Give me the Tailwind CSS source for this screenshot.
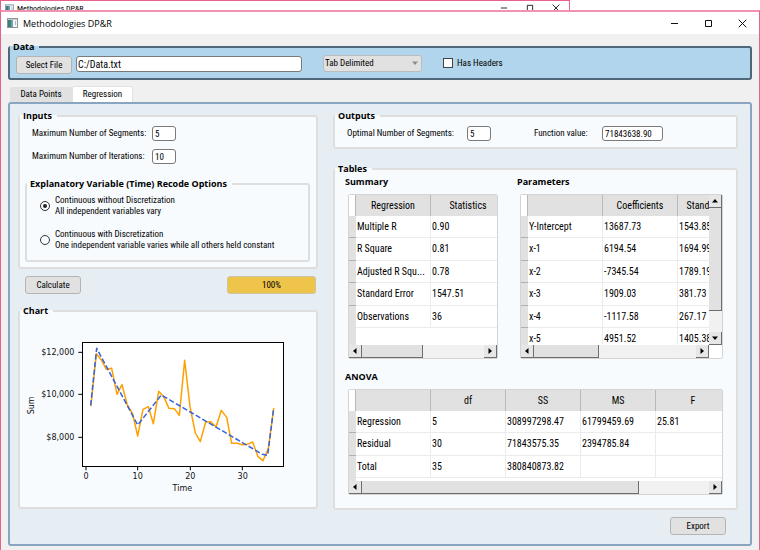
<!DOCTYPE html>
<html lang="en">
<head>
<meta charset="utf-8">
<title>Methodologies DP&amp;R</title>
<script src="https://cdn.jsdelivr.net/npm/@tailwindcss/browser@4"></script>
</head>
<body class="min-h-screen flex flex-col overflow-hidden bg-white text-black text-[9px] leading-[11px] font-['Roboto_Condensed','Open_Sans',sans-serif]">

<svg class="hidden">
  <symbol id="app" viewBox="0 0 11 10">
    <rect x="0.5" y="0.5" width="10" height="9" fill="#f4f6f8" stroke="#8d949a"/>
    <rect x="1" y="1" width="9" height="1" fill="#c3ccd6"/>
    <rect x="1" y="2" width="5" height="7" fill="#3f7f78"/>
    <rect x="4" y="2" width="2" height="7" fill="#6f9fb4"/>
    <rect x="8" y="3" width="1" height="4" fill="#aeb6bd"/>
  </symbol>
  <symbol id="min" viewBox="0 0 9 9"><path d="M1 4.5h7" stroke="#111" fill="none"/></symbol>
  <symbol id="max" viewBox="0 0 9 9"><path d="M1.5 1.5h6v6h-6z" stroke="#111" fill="none"/></symbol>
  <symbol id="close" viewBox="0 0 9 9"><path d="M0.7 0.7l7.6 7.6M8.3 0.7l-7.6 7.6" stroke="#111" fill="none"/></symbol>
  <symbol id="left" viewBox="0 0 6 6"><path d="M4.5 0v6L1 3z"/></symbol>
  <symbol id="right" viewBox="0 0 6 6"><path d="M1.5 0v6L5 3z"/></symbol>
  <symbol id="up" viewBox="0 0 6 6"><path d="M0 4.5h6L3 1z"/></symbol>
  <symbol id="down" viewBox="0 0 6 6"><path d="M0 1.5h6L3 5z"/></symbol>
</svg>

<!-- Window behind -->
<div class="w-3/4 h-[10px] overflow-hidden border-t border-x border-[#e8608c] flex items-start pl-1 pr-[9px]">
  <svg class="w-[9px] h-[9px] mt-[3px] shrink-0"><use href="#app"/></svg>
  <span class="ml-[3px] mt-[2px] text-[8px] leading-[11px] flex-1">Methodologies DP&amp;R</span>
  <div class="flex gap-[18px] mt-[3px] text-black">
    <svg class="w-2 h-2"><use href="#min"/></svg>
    <svg class="w-2 h-2"><use href="#max"/></svg>
    <svg class="w-2 h-2"><use href="#close"/></svg>
  </div>
</div>

<!-- Main window -->
<div class="flex-1 flex flex-col border-t-2 border-x border-t-[#f291b0] border-x-[#e8608c] bg-[#f0f0f0]">
  <header class="h-[22px] bg-white flex items-center pl-[6px] pr-[12px]">
    <svg class="w-[11px] h-[10px] shrink-0" aria-hidden="true"><use href="#app"/></svg>
    <h1 class="ml-[5px] flex-1 text-[9px] font-['Open_Sans',sans-serif]">Methodologies DP&amp;R</h1>
    <div class="flex gap-[25px]">
      <button aria-label="Minimize"><svg class="w-[9px] h-[9px]"><use href="#min"/></svg></button>
      <button aria-label="Maximize"><svg class="w-[9px] h-[9px]"><use href="#max"/></svg></button>
      <button aria-label="Close"><svg class="w-[9px] h-[9px]"><use href="#close"/></svg></button>
    </div>
  </header>

  <main class="px-[7px] pt-[7px]">
    <fieldset class="border-2 border-[#50677a] rounded-[3px] bg-[#b0d5ec]">
      <legend class="pl-[3px] pr-[5px] text-[9px] leading-[12px] font-bold font-['Open_Sans',sans-serif]">Data</legend>
      <div class="flex items-start pl-[6px] pt-[2px] pb-[4px]">
        <button class="mt-px w-[56px] h-[18px] border border-[#b4b4b4] rounded-[3px] bg-[#e1e1e1] text-[9px]">Select File</button>
        <input aria-label="File path" value="C:/Data.txt" class="mt-px ml-1 w-[226px] h-[16px] border border-[#7a7a7a] rounded-[3px] bg-white px-px text-[10px]">
        <div class="relative ml-[21px] w-[99px]">
          <select aria-label="Delimiter" class="appearance-none w-full h-[17px] border border-[#b9bdc0] rounded-[3px] bg-[#e1e1e1] pl-px text-[9px]"><option>Tab Delimited</option></select>
          <svg class="absolute right-[4px] top-[5px] w-[6px] h-[6px] fill-[#8c8c8c] pointer-events-none"><use href="#down"/></svg>
        </div>
        <label class="ml-[21px] h-[16px] flex items-center gap-1"><input type="checkbox" class="appearance-none w-[10px] h-[10px] border border-[#444] bg-white">Has Headers</label>
      </div>
    </fieldset>

    <div class="flex items-end pl-[2px] pt-[6px]" role="tablist">
      <button role="tab" class="w-[62px] h-[15px] bg-[#e1e1e1] rounded-t-[2px]">Data Points</button>
      <button role="tab" aria-selected="true" class="w-[61px] h-[16px] bg-white border border-b-0 border-[#e2e2e2] rounded-t-[2px]">Regression</button>
    </div>

    <section class="border-2 border-[#8aa5bf] rounded-[3px] bg-[#e6eef4] grid grid-cols-[minmax(0,300fr)_minmax(0,405fr)] gap-x-[15px] pl-2 pr-3 pt-[6px] pb-[9px]">

      <div class="flex flex-col">
        <fieldset class="border-2 border-[#dedede] rounded-[3px] bg-[#f8fbfe]">
          <legend class="pl-[3px] pr-[5px] text-[9px] leading-[12px] font-bold font-['Open_Sans',sans-serif]">Inputs</legend>
          <div class="pl-[5px] pr-[6px] pt-[4px] pb-[5px]">
            <div class="grid grid-cols-[120px_24px] gap-y-2 items-center pl-[7px]">
              <label for="seg">Maximum Number of Segments:</label>
              <input id="seg" value="5" class="w-full h-[15px] border border-[#7a7a7a] rounded-[3px] bg-white px-[2px]">
              <label for="iter">Maximum Number of Iterations:</label>
              <input id="iter" value="10" class="w-full h-[15px] border border-[#7a7a7a] rounded-[3px] bg-white px-[2px]">
            </div>
            <fieldset class="mt-[14px] border-2 border-[#dedede] rounded-[3px]">
              <legend class="pl-[3px] pr-[5px] text-[9px] leading-[12px] font-bold font-['Open_Sans',sans-serif]">Explanatory Variable (Time) Recode Options</legend>
              <div class="flex flex-col gap-3 pl-[13px] pt-[5px] pb-[9px]">
                <label class="flex items-center gap-[5px]"><input type="radio" name="opt" checked class="appearance-none w-[10px] h-[10px] shrink-0 rounded-full border border-[#333] p-[2px] bg-clip-content checked:bg-[#222]"><span>Continuous without Discretization<br>All independent variables vary</span></label>
                <label class="flex items-center gap-[5px]"><input type="radio" name="opt" class="appearance-none w-[10px] h-[10px] shrink-0 rounded-full border border-[#333] p-[2px] bg-clip-content checked:bg-[#222]"><span>Continuous with Discretization<br>One independent variable varies while all others held constant</span></label>
              </div>
            </fieldset>
          </div>
        </fieldset>

        <div class="flex justify-between mt-[7px] pl-[7px] pr-[2px]">
          <button class="w-[56px] h-[18px] border border-[#b4b4b4] rounded-[3px] bg-[#e1e1e1]">Calculate</button>
          <div role="progressbar" aria-valuenow="100" class="w-[89px] h-[18px] border border-[#cdc4a8] rounded-[3px] bg-[#eec44a] flex items-center justify-center">100%</div>
        </div>

        <fieldset class="mt-[11px] border-2 border-[#dedede] rounded-[3px] bg-[#f8fbfe]">
          <legend class="pl-[3px] pr-[5px] text-[9px] leading-[12px] font-bold font-['Open_Sans',sans-serif]">Chart</legend>
          <svg class="block w-full font-['DejaVu_Sans',sans-serif]" viewBox="60 66 888 570" fill="#111" font-size="24">
            <rect x="247.5" y="142.5" width="603" height="372" fill="#fff" stroke="#000" stroke-width="3"/>
            <path d="M235 172h12M235 298h12M235 427h12M258 515v11M413 515v11M571 515v11M727 515v11" stroke="#000" stroke-width="3"/>
            <polyline fill="none" stroke="#ffa000" stroke-width="4.5" stroke-linejoin="round" stroke-linecap="square" points="273,331 289,176 304,195 319,223 335,220 351,298 366,269 382,330 398,357 413,423 429,343 445,335 460,386 476,289 491,305 507,340 523,341 538,361 554,196 570,335 586,414 601,440 617,381 632,380 648,396 664,346 680,367 695,445 711,445 727,449 742,448 758,441 774,485 789,497 805,460 821,341"/>
            <polyline fill="none" stroke="#3463dc" stroke-width="4.5" stroke-dasharray="16 7" stroke-linejoin="round" points="272,331 290,160 413,390 484,300 787,478 803,481 821,340"/>
            <g text-anchor="end"><text x="223" y="180">$12,000</text><text x="223" y="307">$10,000</text><text x="223" y="435">$8,000</text></g>
            <g text-anchor="middle"><text x="258" y="553">0</text><text x="413" y="553">10</text><text x="571" y="553">20</text><text x="728" y="553">30</text><text x="547" y="589">Time</text><text transform="translate(102 331) rotate(-90)">Sum</text></g>
          </svg>
        </fieldset>
      </div>

      <div class="flex flex-col">
        <fieldset class="border-2 border-[#dedede] rounded-[3px] bg-[#f8fbfe]">
          <legend class="pl-[3px] pr-[5px] text-[9px] leading-[12px] font-bold font-['Open_Sans',sans-serif]">Outputs</legend>
          <div class="flex items-center pl-3 pt-[4px] pb-[6px]">
            <label for="opt-seg" class="w-[120px]">Optimal Number of Segments:</label>
            <input id="opt-seg" value="5" readonly class="w-[24px] h-[15px] border border-[#7a7a7a] rounded-[3px] bg-white px-[2px]">
            <label for="fv" class="ml-[43px] w-[68px]">Function value:</label>
            <input id="fv" value="71843638.90" readonly class="w-[61px] h-[15px] border border-[#7a7a7a] rounded-[3px] bg-white px-[2px]">
          </div>
        </fieldset>

        <fieldset class="mt-[14px] min-w-0 border-2 border-[#dedede] rounded-[3px] bg-[#f8fbfe]">
          <legend class="pl-[3px] pr-[5px] text-[9px] leading-[12px] font-bold font-['Open_Sans',sans-serif]">Tables</legend>
          <div class="px-[13px] pt-px pb-[13px]">
            <div class="flex gap-[22px]">
              <section class="w-[150px]">
                <h2 class="-ml-[3px] mb-[6px] text-[9px] leading-[12px] font-bold font-['Open_Sans',sans-serif]">Summary</h2>
                <div class="border border-[#d4d4d4] rounded-[2px] bg-white">
                  <div class="h-[150px] overflow-hidden">
                    <table class="table-fixed w-[157px] h-full border-separate border-spacing-0 text-[10px] leading-[12px] [&_thead_th]:border-r [&_thead_th]:border-[#b8b8b8] [&_thead_th]:bg-[#e1e1e1] [&_thead_th]:font-normal [&_tbody_th]:bg-[#e1e1e1] [&_tbody_th]:border-b [&_tbody_th]:border-[#b0b0b0] [&_td]:border-r [&_td]:border-b [&_td]:border-[#ebebeb] [&_td]:pl-px [&_td]:truncate">
                      <colgroup><col class="w-[7px]"><col class="w-[75px]"><col class="w-[75px]"></colgroup>
                      <thead><tr class="h-[21px]"><th class="bg-white!"></th><th>Regression</th><th>Statistics</th></tr></thead>
                      <tbody>
                        <tr class="h-[22px]"><th></th><td>Multiple R</td><td>0.90</td></tr>
                        <tr class="h-[23px]"><th></th><td>R Square</td><td>0.81</td></tr>
                        <tr class="h-[22px]"><th></th><td>Adjusted R Squ...</td><td>0.78</td></tr>
                        <tr class="h-[23px]"><th></th><td>Standard Error</td><td>1547.51</td></tr>
                        <tr class="h-[22px]"><th class="border-b-0!"></th><td>Observations</td><td>36</td></tr>
                        <tr><th class="border-b-0!"></th><td class="border-0!"></td><td class="border-0!"></td></tr>
                      </tbody>
                    </table>
                  </div>
                  <div class="h-[13px] flex bg-[#f1f1f1]">
                    <button aria-label="Scroll left" class="w-[13px] bg-[#e6e6e6] border-r border-b border-[#6e6e6e] flex items-center justify-center"><svg class="w-[6px] h-[6px]"><use href="#left"/></svg></button>
                    <div class="w-[61px] bg-[#e1e1e1] border-r border-b border-[#6e6e6e]"></div>
                    <div class="flex-1"></div>
                    <button aria-label="Scroll right" class="w-[13px] bg-[#e6e6e6] border-r border-b border-[#6e6e6e] flex items-center justify-center"><svg class="w-[6px] h-[6px]"><use href="#right"/></svg></button>
                  </div>
                </div>
              </section>

              <section class="flex-1 min-w-0">
                <h2 class="-ml-[3px] mb-[6px] text-[9px] leading-[12px] font-bold font-['Open_Sans',sans-serif]">Parameters</h2>
                <div class="border border-[#d4d4d4] rounded-[2px] bg-white">
                  <div class="flex h-[150px]">
                    <div class="flex-1 min-w-0 overflow-hidden">
                      <table class="table-fixed w-[232px] border-separate border-spacing-0 text-[10px] leading-[12px] [&_thead_th]:border-r [&_thead_th]:border-[#b8b8b8] [&_thead_th]:bg-[#e1e1e1] [&_thead_th]:font-normal [&_tbody_th]:bg-[#e1e1e1] [&_tbody_th]:border-b [&_tbody_th]:border-[#b0b0b0] [&_td]:border-r [&_td]:border-b [&_td]:border-[#ebebeb] [&_td]:pl-px [&_td]:truncate">
                        <colgroup><col class="w-[7px]"><col class="w-[75px]"><col class="w-[75px]"><col class="w-[75px]"></colgroup>
                        <thead><tr class="h-[21px]"><th class="bg-white!"></th><th></th><th>Coefficients</th><th class="whitespace-nowrap">Standard Error</th></tr></thead>
                        <tbody>
                          <tr class="h-[22px]"><th></th><td>Y-Intercept</td><td>13687.73</td><td>1543.85</td></tr>
                          <tr class="h-[23px]"><th></th><td>x-1</td><td>6194.54</td><td>1694.99</td></tr>
                          <tr class="h-[22px]"><th></th><td>x-2</td><td>-7345.54</td><td>1789.19</td></tr>
                          <tr class="h-[23px]"><th></th><td>x-3</td><td>1909.03</td><td>381.73</td></tr>
                          <tr class="h-[22px]"><th></th><td>x-4</td><td>-1117.58</td><td>267.17</td></tr>
                          <tr class="h-[23px]"><th></th><td>x-5</td><td>4951.52</td><td>1405.38</td></tr>
                        </tbody>
                      </table>
                    </div>
                    <div class="w-[13px] flex flex-col bg-[#f1f1f1]">
                      <button aria-label="Scroll up" class="h-[13px] bg-[#e6e6e6] border-r border-b border-[#6e6e6e] flex items-center justify-center"><svg class="w-[6px] h-[6px]"><use href="#up"/></svg></button>
                      <div class="h-[103px] bg-[#e1e1e1] border-r border-b border-[#6e6e6e]"></div>
                      <div class="flex-1"></div>
                      <button aria-label="Scroll down" class="h-[13px] bg-[#e6e6e6] border-r border-b border-[#6e6e6e] flex items-center justify-center"><svg class="w-[6px] h-[6px]"><use href="#down"/></svg></button>
                    </div>
                  </div>
                  <div class="h-[13px] flex bg-[#f1f1f1]">
                    <button aria-label="Scroll left" class="w-[13px] bg-[#e6e6e6] border-r border-b border-[#6e6e6e] flex items-center justify-center"><svg class="w-[6px] h-[6px]"><use href="#left"/></svg></button>
                    <div class="w-[65px] bg-[#e1e1e1] border-r border-b border-[#6e6e6e]"></div>
                    <div class="flex-1"></div>
                    <button aria-label="Scroll right" class="w-[13px] bg-[#e6e6e6] border-r border-b border-[#6e6e6e] flex items-center justify-center"><svg class="w-[6px] h-[6px]"><use href="#right"/></svg></button>
                    <div class="w-[13px] bg-white"></div>
                  </div>
                </div>
              </section>
            </div>

            <section class="mt-[12px]">
              <h2 class="-ml-[3px] mb-[6px] text-[9px] leading-[12px] font-bold font-['Open_Sans',sans-serif]">ANOVA</h2>
              <div class="border border-[#d4d4d4] rounded-[2px] bg-white">
                <div class="h-[91px] overflow-hidden">
                  <table class="table-fixed w-[382px] border-separate border-spacing-0 text-[10px] leading-[12px] [&_thead_th]:border-r [&_thead_th]:border-[#b8b8b8] [&_thead_th]:bg-[#e1e1e1] [&_thead_th]:font-normal [&_tbody_th]:bg-[#e1e1e1] [&_tbody_th]:border-b [&_tbody_th]:border-[#b0b0b0] [&_td]:border-r [&_td]:border-b [&_td]:border-[#ebebeb] [&_td]:pl-px [&_td]:truncate">
                    <colgroup><col class="w-[7px]"><col class="w-[75px]"><col class="w-[75px]"><col class="w-[75px]"><col class="w-[75px]"><col class="w-[75px]"></colgroup>
                    <thead><tr class="h-[21px]"><th class="bg-white!"></th><th></th><th>df</th><th>SS</th><th>MS</th><th>F</th></tr></thead>
                    <tbody>
                      <tr class="h-[22px]"><th></th><td>Regression</td><td>5</td><td>308997298.47</td><td>61799459.69</td><td>25.81</td></tr>
                      <tr class="h-[23px]"><th></th><td>Residual</td><td>30</td><td>71843575.35</td><td>2394785.84</td><td></td></tr>
                      <tr class="h-[22px]"><th class="border-b-0!"></th><td>Total</td><td>35</td><td>380840873.82</td><td></td><td></td></tr>
                      <tr class="h-[3px]"><th class="border-b-0!"></th></tr>
                    </tbody>
                  </table>
                </div>
                <div class="h-[13px] flex bg-[#f1f1f1]">
                  <button aria-label="Scroll left" class="w-[13px] bg-[#e6e6e6] border-r border-b border-[#6e6e6e] flex items-center justify-center"><svg class="w-[6px] h-[6px]"><use href="#left"/></svg></button>
                  <div class="w-[277px] bg-[#e1e1e1] border-r border-b border-[#6e6e6e]"></div>
                  <div class="flex-1"></div>
                  <button aria-label="Scroll right" class="w-[13px] bg-[#e6e6e6] border-r border-b border-[#6e6e6e] flex items-center justify-center"><svg class="w-[6px] h-[6px]"><use href="#right"/></svg></button>
                </div>
              </div>
            </section>
          </div>
        </fieldset>

        <button class="self-end mt-[7px] mr-3 w-[56px] h-[18px] border border-[#b4b4b4] rounded-[3px] bg-[#e1e1e1]">Export</button>
      </div>
    </section>
  </main>
</div>
</body>
</html>
